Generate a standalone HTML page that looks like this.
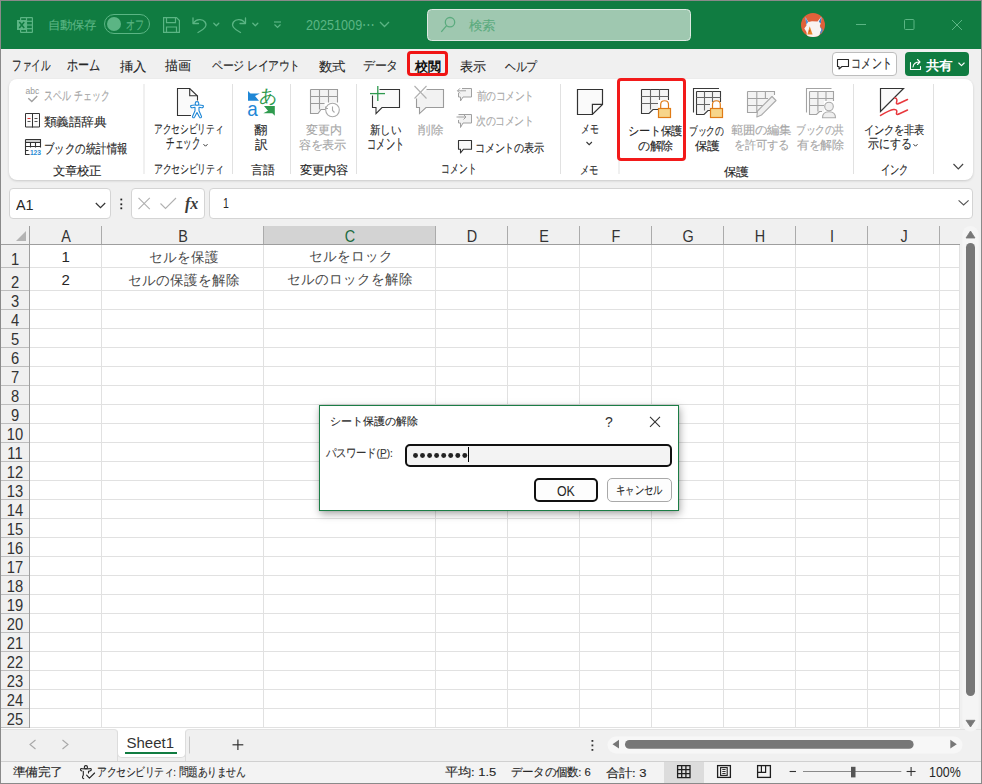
<!DOCTYPE html>
<html><head><meta charset="utf-8">
<style>
*{margin:0;padding:0;box-sizing:border-box}
html,body{width:982px;height:784px;overflow:hidden;background:#f0f0f0}
body{position:relative;font-family:"Liberation Sans",sans-serif;color:#242424}
.a{position:absolute}
.t{position:absolute;white-space:nowrap;line-height:1}
.c{text-align:center}
svg{position:absolute;overflow:visible}
.lg{color:#5bb584}
.rb{font-size:12px;color:#262626}
.t{-webkit-text-stroke:0.12px currentColor}
.ns{-webkit-text-stroke:0}
.gr{color:#a6a6a6}
</style></head><body>
<div class="a" style="left:0;top:0;width:982px;height:784px;border:1px solid #8a8a8a;z-index:50"></div>
<div class="a" style="left:1px;top:1px;width:980px;height:48px;background:#107c41"></div>
<!-- excel icon -->
<svg style="left:0;top:0" width="982" height="49">
 <g fill="none" stroke="#5bb584" stroke-width="1.2">
  <rect x="20.6" y="17.6" width="11.8" height="14.8" rx="0.5"/>
  <line x1="26.5" y1="17.6" x2="26.5" y2="32.4"/>
  <line x1="20.6" y1="21.3" x2="32.4" y2="21.3"/>
  <line x1="20.6" y1="25" x2="32.4" y2="25"/>
  <line x1="20.6" y1="28.7" x2="32.4" y2="28.7"/>
 </g>
 <rect x="17" y="20" width="9.5" height="10" fill="#5bb584"/>
 <path d="M19.3 22 L24.2 28 M24.2 22 L19.3 28" stroke="#107c41" stroke-width="1.5"/>
 <!-- toggle -->
 <rect x="104.5" y="14.5" width="45" height="19" rx="9.5" fill="none" stroke="#5bb584" stroke-width="1"/>
 <circle cx="114" cy="24" r="7" fill="#5bb584"/>
 <!-- save icon -->
 <g fill="none" stroke="#5bb584" stroke-width="1.2">
  <path d="M163.6 17.6 H176.5 L179.4 20.5 V32.4 H163.6 Z"/>
  <path d="M166.5 17.6 V22.6 H175.5 V17.6"/>
  <path d="M166.5 32.4 V27 H176.5 V32.4"/>
 </g>
 <!-- undo -->
 <g fill="none" stroke="#5bb584" stroke-width="1.3" stroke-linecap="round" stroke-linejoin="round">
  <path d="M193 18 V23.5 H198.5"/>
  <path d="M193.5 23 C196 19 202.5 18.5 205 22 C207.5 25.5 205 29 198 32.5"/>
  <path d="M213.8 23.2 L216.3 25.7 L218.8 23.2"/>
 </g>
 <!-- redo -->
 <g fill="none" stroke="#5bb584" stroke-width="1.3" stroke-linecap="round" stroke-linejoin="round">
  <path d="M245.5 18 V23.5 H240"/>
  <path d="M245 23 C242.5 19 236 18.5 233.5 22 C231 25.5 233.5 29 240.5 32.5"/>
  <path d="M252.8 23.2 L255.3 25.7 L257.8 23.2"/>
 </g>
 <!-- customize -->
 <g fill="none" stroke="#5bb584" stroke-width="1.2">
  <line x1="274" y1="22" x2="281" y2="22"/>
  <path d="M274.5 24.5 L277.5 27.5 L280.5 24.5"/>
 </g>
 <!-- filename chevron -->
 <path d="M380 22 L384.5 26.5 L389 22" fill="none" stroke="#5bb584" stroke-width="1.3"/>
 <!-- search box -->
 <rect x="427.5" y="9.5" width="263" height="31" rx="4" fill="#9fc8b0" stroke="#dde9e2" stroke-width="1"/>
 <g fill="none" stroke="#5bab7e" stroke-width="1.3">
  <circle cx="450" cy="22.2" r="4.7"/>
  <line x1="446.6" y1="25.6" x2="441.3" y2="31.8"/>
 </g>
 <!-- avatar -->
 <defs><clipPath id="av"><circle cx="813" cy="25" r="12"/></clipPath></defs>
 <circle cx="813" cy="25" r="12" fill="#e0613a"/>
 <g clip-path="url(#av)">
  <path d="M805.3 17 L808.5 22 L812 21.3 L817.5 21.5 L821.5 16.5 L821 22.5 L819.8 26 L821.5 29.5 L820 33 L819 38 H807 L806.5 32 L804.3 28.5 L806.5 25.5 Z" fill="#f9f3f1"/>
  <path d="M805.3 17 L808.2 22 L806.3 24.5 Z" fill="#4a8fd4"/>
  <path d="M821.5 16.5 L818.8 21.8 L820.8 23.5 Z" fill="#3d7fc4"/>
  <path d="M819.8 26 L821.5 29.5 L820 33 L821 34 L823 30 Z" fill="#4a8fd4"/>
  <path d="M809.7 26.3 L812.6 34.6 H807.4 Z" fill="#e8862a"/>
  <circle cx="809.6" cy="31" r="0.8" fill="#c0392b"/>
 </g>
 <!-- window controls -->
 <g fill="none" stroke="#5bb584" stroke-width="1">
  <line x1="856" y1="24.5" x2="866" y2="24.5"/>
  <rect x="904.5" y="19.5" width="9.5" height="10" rx="1"/>
  <path d="M952 20 L962 30 M962 20 L952 30"/>
 </g>
</svg>
<div class="a" style="left:1px;top:49px;width:980px;height:30px;background:#f0f0f0"></div>
<div class="a" style="left:407px;top:50.5px;width:41px;height:25.5px;border:3px solid #f01414;border-radius:4px"></div>
<div class="a" style="left:832px;top:52px;width:65px;height:24px;background:#fff;border:1px solid #bdbdbd;border-radius:4px"></div>
<div class="a" style="left:905px;top:52px;width:64px;height:24px;background:#107c41;border-radius:4px"></div>
<svg style="left:0;top:0" width="982" height="80">
 <path d="M837.5 59.5 H848.5 V66.5 H842 L839 69 V66.5 H837.5 Z" fill="none" stroke="#262626" stroke-width="1.1" stroke-linejoin="round"/>
 <g fill="none" stroke="#fff" stroke-width="1.1" stroke-linejoin="round" stroke-linecap="round">
  <path d="M910.5 62.5 V69.5 H920.5 V66.5"/>
  <path d="M913 67 C913.5 63.5 916 62 919.5 62 M917.5 59.5 L920 62 L917.5 64.5"/>
  <path d="M958.8 63 L961.5 65.7 L964.2 63"/>
 </g>
</svg>
<div class="a" style="left:9px;top:79px;width:964px;height:101px;background:#fff;border-radius:8px;box-shadow:0 1px 2.5px rgba(0,0,0,.16)"></div>
<svg style="left:0;top:0" width="982" height="184">
 <!-- separators -->
 <g stroke="#e1e1e1" stroke-width="1">
  <line x1="144" y1="84" x2="144" y2="174"/>
  <line x1="232.5" y1="84" x2="232.5" y2="174"/>
  <line x1="290.5" y1="84" x2="290.5" y2="174"/>
  <line x1="356.5" y1="84" x2="356.5" y2="174"/>
  <line x1="560.5" y1="84" x2="560.5" y2="174"/>
  <line x1="619" y1="161" x2="619" y2="174"/>
  <line x1="853.5" y1="84" x2="853.5" y2="174"/>
  <line x1="933.5" y1="84" x2="933.5" y2="174"/>
 </g>
 <!-- spell check -->
 <text x="25.5" y="93.8" font-family="Liberation Sans" font-size="8.5" fill="#9a9a9a">abc</text>
 <path d="M28.3 98.3 L31.8 101.6 L37.2 96" fill="none" stroke="#a0a0a0" stroke-width="1.4"/>
 <!-- thesaurus book -->
 <path d="M25.5 113.5 H39.5 V127 H25.5 Z" fill="#fafafa" stroke="#333" stroke-width="1"/>
 <line x1="32.5" y1="113.5" x2="32.5" y2="127.5" stroke="#333" stroke-width="1"/>
 <line x1="27.5" y1="118.5" x2="30.5" y2="118.5" stroke="#e03030" stroke-width="1"/>
 <g stroke="#555" stroke-width="1"><line x1="34.5" y1="118.5" x2="37.5" y2="118.5"/><line x1="27.5" y1="121.5" x2="30.5" y2="121.5"/><line x1="34.5" y1="121.5" x2="37.5" y2="121.5"/></g>
 <!-- workbook stats -->
 <rect x="26" y="140" width="14" height="2.2" fill="#cfcfcf"/>
 <path d="M25.5 139.5 H40.5 V147.5 M25.5 139.5 V154.5 H29.6 M25.5 142.5 H40.5 M25.5 146.5 H40.5 M30.5 142.5 V147.5 M35.5 142.5 V147.5 M25.5 150.5 H28.5" fill="none" stroke="#333" stroke-width="1.1"/>
 <text x="29.9" y="154.6" font-family="Liberation Sans" font-weight="bold" font-size="7.6" fill="#2a8ad4" textLength="11.2" lengthAdjust="spacingAndGlyphs">123</text>
 <!-- accessibility -->
 <path d="M197.5 100.5 V96 L189.7 88.5 H177.5 V115.5 H190.9" fill="#fafafa" stroke="#333" stroke-width="1.1"/>
 <path d="M189.7 88.5 V95.8 H197.5" fill="none" stroke="#333" stroke-width="1.1"/>
 <g fill="#fff" stroke="#1f87d6" stroke-width="1.1" stroke-linejoin="round">
  <path d="M191 105.5 C190 106.5 191 108 192.5 107.8 L195 107.3 V110.8 L192.6 116.3 C192 117.6 193.8 118.3 194.5 117.2 L197 112.5 L199.5 117.2 C200.2 118.3 202 117.6 201.4 116.3 L199 110.8 V107.3 L201.5 107.8 C203 108 204 106.5 203 105.5 L199.5 105 H194.5 Z"/>
  <circle cx="197" cy="103.4" r="1.8"/>
 </g>
 <!-- translate -->
 <path d="M248 91 L250.5 93.5 L259.8 93.5 L255 96 L259 100.8 L248 100.8 Z" fill="#1f87d6"/>
 <text x="247.3" y="115.6" font-family="Liberation Sans" font-size="21" fill="#1f87d6" textLength="10.5" lengthAdjust="spacingAndGlyphs">a</text>
 <text x="259.3" y="101.5" font-size="17.5" fill="#2e9a4e" style="font-family:'Liberation Sans',sans-serif">あ</text>
 <path d="M274.8 106 L274.8 115.8 L272.3 113.3 L263.3 113.3 L268 110.8 L264 106 Z" fill="#2e9a4e"/>
 <!-- track changes (gray) -->
 <path d="M310.5 89.5 H337.5 V102.5 H324.5 V109.5 H321 L318 113.5 H310.5 Z" fill="#f3f3f3"/>
 <g fill="none" stroke="#9b9b9b" stroke-width="1.1">
  <path d="M310.5 89.5 H337.5 V102.5 M310.5 89.5 V113.5 H318 L321 109.5 H325.5 M310.5 96.5 H337.5 M310.5 103.5 H324.5 M319.5 89.5 V109.5 M328.5 89.5 V102.5"/>
  <circle cx="332.5" cy="110" r="6.8" stroke="#aaa"/>
  <path d="M332.5 106.5 V110.5 L334.5 112.5" stroke="#aaa"/>
 </g>
 <path d="M325.5 106.5 V108.5 H328" fill="none" stroke="#aaa" stroke-width="1.1"/>
 <!-- new comment -->
 <path d="M379.5 89.5 H399.5 V107.5 H382 L376 113.6 V107.5 H372.5 V95.5" fill="#fafafa" stroke="#333" stroke-width="1.1"/>
 <g stroke="#2e9a4e" stroke-width="1.3"><line x1="377.8" y1="86" x2="377.8" y2="101"/><line x1="370" y1="93.6" x2="385" y2="93.6"/></g>
 <!-- delete comment -->
 <path d="M426.5 89.5 H443.5 V107.5 H426 L419.5 113.6 V107.5 H416.5 V98.5" fill="#f2f2f2" stroke="#9b9b9b" stroke-width="1.1"/>
 <g stroke="#b0b0b0" stroke-width="1.1"><line x1="414.5" y1="86" x2="426.5" y2="98.5"/><line x1="426.5" y1="86" x2="414.5" y2="98.5"/></g>
 <!-- prev / next / show comments -->
 <g fill="#f2f2f2" stroke="#a0a0a0" stroke-width="1">
  <path d="M462 88.5 H471.5 V97 H463 L460.5 101 V97 H458.5 V93"/>
  <path d="M458.5 114.5 H471.5 V123 H463 L460.5 127.5 V123 H458.5 V120"/>
 </g>
 <g fill="none" stroke="#a0a0a0" stroke-width="1">
  <path d="M466 90.8 H457.5 M460 88.3 L457.5 90.8 L460 93.3"/>
  <path d="M456.5 117 H466 M463.5 114.5 L466 117 L463.5 119.5"/>
 </g>
 <path d="M458.5 140.5 H471.5 V149.2 H463.5 L460.5 153 V149.2 H458.5 Z" fill="#fafafa" stroke="#333" stroke-width="1.1" stroke-linejoin="round"/>
 <!-- memo -->
 <path d="M577.5 89.5 H602.5 V104.4 L592.4 114.5 H577.5 Z" fill="#fafafa" stroke="#333" stroke-width="1.2"/>
 <path d="M602.5 104.4 H592.4 V114.5" fill="none" stroke="#333" stroke-width="1.2"/>
 <path d="M586.5 142 L589.2 144.7 L591.9 142" fill="none" stroke="#333" stroke-width="1.1"/>
 <!-- unprotect sheet -->
 <path d="M641.5 89.5 H668.5 V100 H658 V109.5 H653 L649 113.5 H641.5 Z" fill="#f4f4f4"/>
 <g fill="none" stroke="#3a3a3a" stroke-width="1.1">
  <path d="M641.5 89.5 H668.5 V100 M641.5 89.5 V113.5 H649 L653 109.5 H660"/>
  <path d="M641.5 96.5 H668.5 M641.5 103.5 H658 M650.5 89.5 V109.5 M659.5 89.5 V100" stroke="#666"/>
 </g>
 <g stroke="#e07b16" stroke-width="1.2">
  <path d="M660.7 108 V104.5 C660.7 99.5 668.5 99.5 668.5 104.5 V108" fill="none"/>
  <rect x="658.5" y="108.5" width="12" height="9" fill="#f7d58a"/>
 </g>
 <!-- protect workbook -->
 <path d="M696.5 91.5 H720.5 V102 H710 V110.5 H708 L704 114.5 H696.5 Z" fill="#f4f4f4"/>
 <g fill="none" stroke="#3a3a3a" stroke-width="1.1">
  <path d="M719 88.5 H693.5 V112.5"/>
  <path d="M696.5 91.5 H720.5 V102 M696.5 91.5 V114.5 H704 L708 110.5 H710"/>
  <path d="M696.5 97.5 H720.5 M696.5 104.5 H710 M704.5 91.5 V110.5 M712.5 91.5 V102" stroke="#666"/>
 </g>
 <g stroke="#e07b16" stroke-width="1.2">
  <path d="M712.5 108 V104.5 C712.5 99.5 720.3 99.5 720.3 104.5 V108" fill="none"/>
  <rect x="710.5" y="108.5" width="12" height="9" fill="#f7d58a"/>
 </g>
 <!-- allow edit ranges (gray) -->
 <path d="M747.5 91.5 H774.5 V95 L760 112.5 H747.5 Z" fill="#f3f3f3"/>
 <g fill="none" stroke="#a3a3a3" stroke-width="1.1">
  <path d="M747.5 91.5 H774.5 V95 M747.5 91.5 V112.5 H760 M747.5 98.5 H768 M747.5 105.5 H763 M756.8 91.5 V112.5 M765.4 91.5 V98.5"/>
 </g>
 <path d="M772 96.5 L776 100.5 L761.5 115 L756.8 117 L757.5 111 Z" fill="#efefef" stroke="#aaa" stroke-width="1.1" stroke-linejoin="round"/>
 <!-- unshare workbook -->
 <path d="M809.5 91.5 H833.5 V101 H824 V111.5 H819.5 L816.5 114.5 H809.5 Z" fill="#f3f3f3"/>
 <g fill="none" stroke="#a3a3a3" stroke-width="1.1">
  <path d="M831.5 88.5 H806.5 V112.5"/>
  <path d="M809.5 91.5 H833.5 V101 M809.5 91.5 V114.5 H816.5 L819.5 111.5 H822 M809.5 98.5 H833.5 M809.5 105.5 H824 M817.9 91.5 V111.5 M826 91.5 V101"/>
 </g>
 <g fill="#efefef" stroke="#aaa" stroke-width="1.1">
  <circle cx="829" cy="106.5" r="4.3"/>
  <path d="M822.5 117.8 C822.5 113.5 825.5 111.8 829 111.8 C832.5 111.8 835.5 113.5 835.5 117.8 Z"/>
 </g>
 <!-- ink -->
 <path d="M880.5 88.5 H903.5 L880.5 111.5 Z" fill="#fafafa" stroke="#333" stroke-width="1.2" stroke-linejoin="miter"/>
 <g fill="none" stroke="#e8383d" stroke-width="1.5" stroke-linecap="round">
  <path d="M894.8 98 C897.5 98 897 101 896.5 102.5 C896 104.5 898 104 900 103 L907.5 99.5"/>
  <path d="M880.5 115.5 C884 113.5 889 110.3 893.5 109.5 C897.5 109 897 111.5 896.5 113 C896 115 898 114.5 900 113.5 L907.5 110"/>
 </g>
 <!-- chevrons -->
 <path d="M203.5 144.2 L205.5 146.2 L207.5 144.2" fill="none" stroke="#333" stroke-width="1"/>
 <path d="M913.5 144.2 L915.5 146.2 L917.5 144.2" fill="none" stroke="#333" stroke-width="1"/>
 <path d="M953.5 164 L958.3 168.8 L963.1 164" fill="none" stroke="#444" stroke-width="1.2"/>
</svg>
<div class="a" style="left:617px;top:78px;width:69px;height:83px;border:3px solid #f21a1a;border-radius:4px"></div>
<div class="a" style="left:9px;top:188px;width:102px;height:31px;background:#fff;border:1px solid #d4d4d4;border-radius:4px"></div>
<div class="a" style="left:131px;top:188px;width:74px;height:31px;background:#fff;border:1px solid #d4d4d4;border-radius:4px"></div>
<div class="a" style="left:209px;top:188px;width:764px;height:31px;background:#fff;border:1px solid #d4d4d4;border-radius:4px"></div>
<svg style="left:0;top:0" width="982" height="226">
 <path d="M95.8 203 L100.5 207.7 L105.2 203" fill="none" stroke="#333" stroke-width="1.2"/>
 <g fill="#222"><rect x="120.4" y="198.6" width="1.8" height="1.8"/><rect x="120.4" y="203.4" width="1.8" height="1.8"/><rect x="120.4" y="207.4" width="1.8" height="1.8"/></g>
 <path d="M138.5 197.8 L149.8 209.1 M149.8 197.8 L138.5 209.1" stroke="#b0b0b0" stroke-width="1.1"/>
 <path d="M160.5 203.5 L165.5 208.5 L176 198" fill="none" stroke="#b0b0b0" stroke-width="1.1"/>
 <text x="185" y="208.5" font-family="Liberation Serif" font-style="italic" font-weight="bold" font-size="16" fill="#3a3a3a">fx</text>
 <path d="M958.6 200.3 L963.6 205 L968.6 200.3" fill="none" stroke="#555" stroke-width="1.1"/>
</svg>
<div class="a" style="left:30px;top:245px;width:930px;height:484px;background:#fff"></div>
<div class="a" style="left:264px;top:226px;width:171px;height:18px;background:#d3d3d3"></div>
<svg style="left:0;top:0" width="982" height="784" shape-rendering="crispEdges"><line x1="30" y1="267.5" x2="960" y2="267.5" stroke="#e1e1e1"/><line x1="1" y1="267.5" x2="29" y2="267.5" stroke="#bdbdbd"/><line x1="30" y1="290.5" x2="960" y2="290.5" stroke="#e1e1e1"/><line x1="1" y1="290.5" x2="29" y2="290.5" stroke="#bdbdbd"/><line x1="30" y1="309.5" x2="960" y2="309.5" stroke="#e1e1e1"/><line x1="1" y1="309.5" x2="29" y2="309.5" stroke="#bdbdbd"/><line x1="30" y1="328.5" x2="960" y2="328.5" stroke="#e1e1e1"/><line x1="1" y1="328.5" x2="29" y2="328.5" stroke="#bdbdbd"/><line x1="30" y1="347.5" x2="960" y2="347.5" stroke="#e1e1e1"/><line x1="1" y1="347.5" x2="29" y2="347.5" stroke="#bdbdbd"/><line x1="30" y1="366.5" x2="960" y2="366.5" stroke="#e1e1e1"/><line x1="1" y1="366.5" x2="29" y2="366.5" stroke="#bdbdbd"/><line x1="30" y1="385.5" x2="960" y2="385.5" stroke="#e1e1e1"/><line x1="1" y1="385.5" x2="29" y2="385.5" stroke="#bdbdbd"/><line x1="30" y1="404.5" x2="960" y2="404.5" stroke="#e1e1e1"/><line x1="1" y1="404.5" x2="29" y2="404.5" stroke="#bdbdbd"/><line x1="30" y1="423.5" x2="960" y2="423.5" stroke="#e1e1e1"/><line x1="1" y1="423.5" x2="29" y2="423.5" stroke="#bdbdbd"/><line x1="30" y1="442.5" x2="960" y2="442.5" stroke="#e1e1e1"/><line x1="1" y1="442.5" x2="29" y2="442.5" stroke="#bdbdbd"/><line x1="30" y1="461.5" x2="960" y2="461.5" stroke="#e1e1e1"/><line x1="1" y1="461.5" x2="29" y2="461.5" stroke="#bdbdbd"/><line x1="30" y1="480.5" x2="960" y2="480.5" stroke="#e1e1e1"/><line x1="1" y1="480.5" x2="29" y2="480.5" stroke="#bdbdbd"/><line x1="30" y1="499.5" x2="960" y2="499.5" stroke="#e1e1e1"/><line x1="1" y1="499.5" x2="29" y2="499.5" stroke="#bdbdbd"/><line x1="30" y1="518.5" x2="960" y2="518.5" stroke="#e1e1e1"/><line x1="1" y1="518.5" x2="29" y2="518.5" stroke="#bdbdbd"/><line x1="30" y1="537.5" x2="960" y2="537.5" stroke="#e1e1e1"/><line x1="1" y1="537.5" x2="29" y2="537.5" stroke="#bdbdbd"/><line x1="30" y1="556.5" x2="960" y2="556.5" stroke="#e1e1e1"/><line x1="1" y1="556.5" x2="29" y2="556.5" stroke="#bdbdbd"/><line x1="30" y1="575.5" x2="960" y2="575.5" stroke="#e1e1e1"/><line x1="1" y1="575.5" x2="29" y2="575.5" stroke="#bdbdbd"/><line x1="30" y1="594.5" x2="960" y2="594.5" stroke="#e1e1e1"/><line x1="1" y1="594.5" x2="29" y2="594.5" stroke="#bdbdbd"/><line x1="30" y1="613.5" x2="960" y2="613.5" stroke="#e1e1e1"/><line x1="1" y1="613.5" x2="29" y2="613.5" stroke="#bdbdbd"/><line x1="30" y1="632.5" x2="960" y2="632.5" stroke="#e1e1e1"/><line x1="1" y1="632.5" x2="29" y2="632.5" stroke="#bdbdbd"/><line x1="30" y1="651.5" x2="960" y2="651.5" stroke="#e1e1e1"/><line x1="1" y1="651.5" x2="29" y2="651.5" stroke="#bdbdbd"/><line x1="30" y1="670.5" x2="960" y2="670.5" stroke="#e1e1e1"/><line x1="1" y1="670.5" x2="29" y2="670.5" stroke="#bdbdbd"/><line x1="30" y1="689.5" x2="960" y2="689.5" stroke="#e1e1e1"/><line x1="1" y1="689.5" x2="29" y2="689.5" stroke="#bdbdbd"/><line x1="30" y1="708.5" x2="960" y2="708.5" stroke="#e1e1e1"/><line x1="1" y1="708.5" x2="29" y2="708.5" stroke="#bdbdbd"/><line x1="30" y1="727.5" x2="960" y2="727.5" stroke="#e1e1e1"/><line x1="1" y1="727.5" x2="29" y2="727.5" stroke="#bdbdbd"/><line x1="101.5" y1="245" x2="101.5" y2="728" stroke="#e1e1e1"/><line x1="263.5" y1="245" x2="263.5" y2="728" stroke="#e1e1e1"/><line x1="435.5" y1="245" x2="435.5" y2="728" stroke="#e1e1e1"/><line x1="507.5" y1="245" x2="507.5" y2="728" stroke="#e1e1e1"/><line x1="579.5" y1="245" x2="579.5" y2="728" stroke="#e1e1e1"/><line x1="651.5" y1="245" x2="651.5" y2="728" stroke="#e1e1e1"/><line x1="723.5" y1="245" x2="723.5" y2="728" stroke="#e1e1e1"/><line x1="795.5" y1="245" x2="795.5" y2="728" stroke="#e1e1e1"/><line x1="867.5" y1="245" x2="867.5" y2="728" stroke="#e1e1e1"/><line x1="939.5" y1="245" x2="939.5" y2="728" stroke="#e1e1e1"/><line x1="959.5" y1="245" x2="959.5" y2="728" stroke="#e1e1e1"/><line x1="101.5" y1="226" x2="101.5" y2="244" stroke="#ababab"/><line x1="263.5" y1="226" x2="263.5" y2="244" stroke="#ababab"/><line x1="435.5" y1="226" x2="435.5" y2="244" stroke="#ababab"/><line x1="507.5" y1="226" x2="507.5" y2="244" stroke="#ababab"/><line x1="579.5" y1="226" x2="579.5" y2="244" stroke="#ababab"/><line x1="651.5" y1="226" x2="651.5" y2="244" stroke="#ababab"/><line x1="723.5" y1="226" x2="723.5" y2="244" stroke="#ababab"/><line x1="795.5" y1="226" x2="795.5" y2="244" stroke="#ababab"/><line x1="867.5" y1="226" x2="867.5" y2="244" stroke="#ababab"/><line x1="939.5" y1="226" x2="939.5" y2="244" stroke="#ababab"/><line x1="1" y1="244.5" x2="960" y2="244.5" stroke="#9e9e9e"/><line x1="29.5" y1="226" x2="29.5" y2="729" stroke="#9e9e9e"/></svg>
<svg style="left:0;top:0" width="982" height="784"><path d="M16 241 H26 V231 Z" fill="#b4b4b4"/></svg>
<div class="t c ns" style="left:45.5px;top:229.2px;width:40px;font-size:16px;color:#333;transform:scaleX(0.9)">A</div>
<div class="t c ns" style="left:162.5px;top:229.2px;width:40px;font-size:16px;color:#333;transform:scaleX(0.9)">B</div>
<div class="t c ns" style="left:329.5px;top:229.2px;width:40px;font-size:16px;color:#1d6b3f;transform:scaleX(0.9)">C</div>
<div class="t c ns" style="left:451.5px;top:229.2px;width:40px;font-size:16px;color:#333;transform:scaleX(0.9)">D</div>
<div class="t c ns" style="left:523.5px;top:229.2px;width:40px;font-size:16px;color:#333;transform:scaleX(0.9)">E</div>
<div class="t c ns" style="left:595.5px;top:229.2px;width:40px;font-size:16px;color:#333;transform:scaleX(0.9)">F</div>
<div class="t c ns" style="left:667.5px;top:229.2px;width:40px;font-size:16px;color:#333;transform:scaleX(0.9)">G</div>
<div class="t c ns" style="left:739.5px;top:229.2px;width:40px;font-size:16px;color:#333;transform:scaleX(0.9)">H</div>
<div class="t c ns" style="left:811.5px;top:229.2px;width:40px;font-size:16px;color:#333;transform:scaleX(0.9)">I</div>
<div class="t c ns" style="left:883.5px;top:229.2px;width:40px;font-size:16px;color:#333;transform:scaleX(0.9)">J</div>
<div class="t c ns" style="left:0px;top:251.8px;width:30px;font-size:16px;color:#333;transform:scaleX(0.92)">1</div>
<div class="t c ns" style="left:0px;top:274.8px;width:30px;font-size:16px;color:#333;transform:scaleX(0.92)">2</div>
<div class="t c ns" style="left:0px;top:293.8px;width:30px;font-size:16px;color:#333;transform:scaleX(0.92)">3</div>
<div class="t c ns" style="left:0px;top:312.8px;width:30px;font-size:16px;color:#333;transform:scaleX(0.92)">4</div>
<div class="t c ns" style="left:0px;top:331.8px;width:30px;font-size:16px;color:#333;transform:scaleX(0.92)">5</div>
<div class="t c ns" style="left:0px;top:350.8px;width:30px;font-size:16px;color:#333;transform:scaleX(0.92)">6</div>
<div class="t c ns" style="left:0px;top:369.8px;width:30px;font-size:16px;color:#333;transform:scaleX(0.92)">7</div>
<div class="t c ns" style="left:0px;top:388.8px;width:30px;font-size:16px;color:#333;transform:scaleX(0.92)">8</div>
<div class="t c ns" style="left:0px;top:407.8px;width:30px;font-size:16px;color:#333;transform:scaleX(0.92)">9</div>
<div class="t c ns" style="left:0px;top:426.8px;width:30px;font-size:16px;color:#333;transform:scaleX(0.92)">10</div>
<div class="t c ns" style="left:0px;top:445.8px;width:30px;font-size:16px;color:#333;transform:scaleX(0.92)">11</div>
<div class="t c ns" style="left:0px;top:464.8px;width:30px;font-size:16px;color:#333;transform:scaleX(0.92)">12</div>
<div class="t c ns" style="left:0px;top:483.8px;width:30px;font-size:16px;color:#333;transform:scaleX(0.92)">13</div>
<div class="t c ns" style="left:0px;top:502.8px;width:30px;font-size:16px;color:#333;transform:scaleX(0.92)">14</div>
<div class="t c ns" style="left:0px;top:521.8px;width:30px;font-size:16px;color:#333;transform:scaleX(0.92)">15</div>
<div class="t c ns" style="left:0px;top:540.8px;width:30px;font-size:16px;color:#333;transform:scaleX(0.92)">16</div>
<div class="t c ns" style="left:0px;top:559.8px;width:30px;font-size:16px;color:#333;transform:scaleX(0.92)">17</div>
<div class="t c ns" style="left:0px;top:578.8px;width:30px;font-size:16px;color:#333;transform:scaleX(0.92)">18</div>
<div class="t c ns" style="left:0px;top:597.8px;width:30px;font-size:16px;color:#333;transform:scaleX(0.92)">19</div>
<div class="t c ns" style="left:0px;top:616.8px;width:30px;font-size:16px;color:#333;transform:scaleX(0.92)">20</div>
<div class="t c ns" style="left:0px;top:635.8px;width:30px;font-size:16px;color:#333;transform:scaleX(0.92)">21</div>
<div class="t c ns" style="left:0px;top:654.8px;width:30px;font-size:16px;color:#333;transform:scaleX(0.92)">22</div>
<div class="t c ns" style="left:0px;top:673.8px;width:30px;font-size:16px;color:#333;transform:scaleX(0.92)">23</div>
<div class="t c ns" style="left:0px;top:692.8px;width:30px;font-size:16px;color:#333;transform:scaleX(0.92)">24</div>
<div class="t c ns" style="left:0px;top:711.8px;width:30px;font-size:16px;color:#333;transform:scaleX(0.92)">25</div>
<div class="a" style="left:1px;top:728px;width:959px;height:22px;background:#fff"></div>
<div class="a" style="left:1px;top:750px;width:980px;height:11px;background:#f0f0f0"></div>
<div class="a" style="left:1px;top:729px;width:116.5px;height:32px;background:#f0f0f0;border-top:1px solid #e2e2e2;border-right:1px solid #dcdcdc;border-top-right-radius:4px"></div>
<div class="a" style="left:184.5px;top:729px;width:796.5px;height:32px;background:#f0f0f0;border-top:1px solid #e2e2e2;border-left:1px solid #dcdcdc;border-top-left-radius:4px"></div>
<div class="a" style="left:116.5px;top:745px;width:69px;height:13px;background:#fff;border:1px solid #dcdcdc;border-top:none;border-radius:0 0 5px 5px"></div>
<div class="a" style="left:1px;top:761px;width:980px;height:22px;background:#f3f3f3;border-top:1px solid #d0d0d0"></div>
<div class="a" style="left:664px;top:762px;width:40px;height:21px;background:#dcdcdc"></div>
<svg style="left:0;top:0" width="982" height="784">
 <g fill="none" stroke="#a8a8a8" stroke-width="1.1">
  <path d="M35.5 740 L30 744.5 L35.5 749"/>
  <path d="M62.5 740 L68 744.5 L62.5 749"/>
 </g>
 <rect x="125" y="752" width="52" height="2" fill="#107c41"/>
 <line x1="189.5" y1="736.5" x2="189.5" y2="753.5" stroke="#c8c8c8" stroke-width="1"/>
 <g stroke="#333" stroke-width="1.2"><line x1="232.5" y1="744.8" x2="243.3" y2="744.8"/><line x1="237.9" y1="739.6" x2="237.9" y2="750"/></g>
 <g fill="#333"><rect x="591.5" y="740" width="1.8" height="1.8"/><rect x="591.5" y="744.5" width="1.8" height="1.8"/><rect x="591.5" y="749" width="1.8" height="1.8"/></g>
 <rect x="607.5" y="736.5" width="355" height="17" rx="8.5" fill="#f7f7f7"/>
 <path d="M612.5 744.2 L619 739.8 V748.6 Z" fill="#777"/>
 <rect x="625" y="740" width="288.6" height="8.8" rx="4.4" fill="#777"/>
 <path d="M956.8 744.2 L950.3 739.8 V748.6 Z" fill="#777"/>
 <!-- accessibility status icon -->
 <g fill="none" stroke="#222" stroke-width="1.1" stroke-linecap="round" stroke-linejoin="round">
  <circle cx="85.9" cy="767.2" r="1.6"/>
  <path d="M82 771 C80 770.8 80 768.2 82 768.6 L85.9 769 L89.8 768.6 C91.8 768.2 91.8 770.8 89.8 771 L88.5 771.4 V773"/>
  <path d="M83.3 771.4 V775 C82.5 776.5 81.8 778.5 83.8 778.7"/>
  <path d="M86.6 775.2 L89.4 778.2 L94.6 773"/>
 </g>
 <!-- view icons -->
 <g fill="none" stroke="#1e1e1e" stroke-width="1.3">
  <path d="M677.6 765.6 H690 V777.6 H677.6 Z M677.6 769.6 H690 M677.6 773.6 H690 M681.7 765.6 V777.6 M685.9 765.6 V777.6"/>
  <rect x="717.6" y="765.6" width="12.8" height="11.8"/>
  <rect x="720.6" y="767.6" width="6.6" height="7.8" stroke-width="1.1"/>
  <path d="M722.3 769.5 H725.6 M722.3 771.5 H725.6 M722.3 773.5 H725.6" stroke-width="0.9"/>
  <rect x="757.6" y="765.6" width="12.8" height="11.8"/>
  <path d="M757.6 772.3 H765.6 V765.6 M761.4 765.6 V772.3" stroke-width="1.2"/>
 </g>
 <g stroke="#333" stroke-width="1.1">
  <line x1="789.6" y1="771.5" x2="796" y2="771.5"/>
  <line x1="906.6" y1="771.5" x2="915.6" y2="771.5"/><line x1="911.1" y1="767" x2="911.1" y2="776"/>
 </g>
 <line x1="803" y1="771.5" x2="901.3" y2="771.5" stroke="#8a8a8a" stroke-width="1"/>
 <rect x="851" y="766.8" width="4.5" height="10.6" fill="#555"/>
</svg>
<svg style="left:0;top:0" width="982" height="784">
 <rect x="962.5" y="226" width="16" height="505.5" rx="8" fill="#f5f5f5"/>
 <path d="M970.5 231 L975 238 H966 Z" fill="#777" stroke="#777" stroke-width="0.8" stroke-linejoin="round"/>
 <rect x="966" y="243" width="9" height="453" rx="4.5" fill="#777"/>
 <path d="M970.5 727 L975 720.3 H966 Z" fill="#777" stroke="#777" stroke-width="0.8" stroke-linejoin="round"/>
</svg>
<div class="a" style="left:319px;top:405px;width:360px;height:106px;background:#fff;border:1px solid #1b7d45;box-shadow:1px 3px 8px rgba(0,0,0,.34),0 0 2px rgba(0,0,0,.12)"></div>
<div class="a" style="left:405px;top:444px;width:267px;height:22.5px;background:#f3f3f3;border:2.5px solid #111;border-radius:5px"></div>
<div class="a" style="left:533.5px;top:478px;width:64px;height:23.5px;background:#fdfdfd;border:2.5px solid #111;border-radius:5px"></div>
<div class="a" style="left:607px;top:478px;width:64.5px;height:23.5px;background:#fdfdfd;border:1px solid #a9a9a9;border-radius:5px"></div>
<svg style="left:0;top:0" width="982" height="784">
 <g fill="#222">
  <circle cx="415.5" cy="455.5" r="2.45"/><circle cx="422.5" cy="455.5" r="2.45"/><circle cx="429.6" cy="455.5" r="2.45"/><circle cx="436.6" cy="455.5" r="2.45"/>
  <circle cx="443.7" cy="455.5" r="2.45"/><circle cx="450.7" cy="455.5" r="2.45"/><circle cx="457.8" cy="455.5" r="2.45"/><circle cx="464.8" cy="455.5" r="2.45"/>
 </g>
 <rect x="468" y="447" width="1" height="15" fill="#000"/>
 <path d="M650 416.8 L660 426.8 M660 416.8 L650 426.8" stroke="#333" stroke-width="1.1"/>
</svg>
<div class="t" style="left:47.7px;top:18.7px;font-size:12px;color:#5bb584;transform:scale(1.007,0.970);transform-origin:0 0;">自動保存</div>
<div class="t" style="left:126.2px;top:17.8px;font-size:12px;color:#5bb584;transform:scale(0.773,1.111);transform-origin:0 0;">オフ</div>
<div class="t ns" style="left:306.0px;top:18.3px;font-size:13px;color:#5bb584;transform:scale(0.971,1.067);transform-origin:0 0;">20251009⋯</div>
<div class="t" style="left:469.1px;top:19.2px;font-size:13px;color:#5bab7e;transform:scale(1.012,0.970);transform-origin:0 0;">検索</div>
<div class="t" style="left:11.5px;top:57.5px;font-size:13px;color:#262626;transform:scale(0.734,1.064);transform-origin:0 0;">ファイル</div>
<div class="t" style="left:67.1px;top:57.3px;font-size:13px;color:#262626;transform:scale(0.865,1.170);transform-origin:0 0;">ホーム</div>
<div class="t" style="left:120.0px;top:59.6px;font-size:13px;color:#262626;transform:scale(1.000,0.970);transform-origin:0 0;">挿入</div>
<div class="t" style="left:165.0px;top:58.6px;font-size:13px;color:#262626;">描画</div>
<div class="t" style="left:212.0px;top:58.6px;font-size:13px;color:#262626;transform:scale(0.819,0.975);transform-origin:0 0;">ページ レイアウト</div>
<div class="t" style="left:319.0px;top:59.6px;font-size:13px;color:#262626;transform:scale(1.000,0.970);transform-origin:0 0;">数式</div>
<div class="t" style="left:362.6px;top:58.6px;font-size:13px;color:#262626;transform:scale(0.897,0.975);transform-origin:0 0;">データ</div>
<div class="t ns" style="left:415.0px;top:59.6px;font-size:13px;color:#111;transform:scale(0.973,0.970);transform-origin:0 0;font-weight:bold">校閲</div>
<div class="t" style="left:460.0px;top:59.6px;font-size:13px;color:#262626;transform:scale(0.973,0.970);transform-origin:0 0;">表示</div>
<div class="t" style="left:505.0px;top:59.6px;font-size:13px;color:#262626;transform:scale(0.821,0.975);transform-origin:0 0;">ヘルプ</div>
<div class="t" style="left:851.3px;top:56.3px;font-size:12px;color:#262626;transform:scale(0.860,1.200);transform-origin:0 0;">コメント</div>
<div class="t ns" style="left:925.6px;top:58.7px;font-size:13px;color:#fff;transform:scale(1.015,0.970);transform-origin:0 0;font-weight:bold">共有</div>
<div class="t" style="left:44.2px;top:88.6px;font-size:12px;color:#a6a6a6;transform:scale(0.762,1.111);transform-origin:0 0;">スペル チェック</div>
<div class="t" style="left:44.0px;top:115.8px;font-size:12px;color:#262626;transform:scale(1.034,0.970);transform-origin:0 0;">類義語辞典</div>
<div class="t" style="left:44.1px;top:142.0px;font-size:12px;color:#262626;transform:scale(0.872,1.091);transform-origin:0 0;">ブックの統計情報</div>
<div class="t" style="left:53.0px;top:165.0px;font-size:12px;color:#262626;transform:scale(1.009,0.970);transform-origin:0 0;">文章校正</div>
<div class="t" style="left:153.9px;top:123.0px;font-size:12px;color:#262626;transform:scale(0.723,1.000);transform-origin:0 0;">アクセシビリティ</div>
<div class="t" style="left:166.3px;top:136.0px;font-size:12px;color:#262626;transform:scale(0.711,1.244);transform-origin:0 0;">チェック</div>
<div class="t" style="left:153.9px;top:163.0px;font-size:12px;color:#262626;transform:scale(0.723,0.970);transform-origin:0 0;">アクセシビリティ</div>
<div class="t" style="left:254.3px;top:124.0px;font-size:12px;color:#262626;transform:scale(1.118,1.000);transform-origin:0 0;">翻</div>
<div class="t" style="left:255.4px;top:138.5px;font-size:12px;color:#262626;transform:scale(1.025,1.045);transform-origin:0 0;">訳</div>
<div class="t" style="left:251.0px;top:164.0px;font-size:12px;color:#262626;transform:scale(0.970,0.970);transform-origin:0 0;">言語</div>
<div class="t" style="left:306.0px;top:124.0px;font-size:12px;color:#a6a6a6;">変更内</div>
<div class="t" style="left:299.0px;top:138.5px;font-size:12px;color:#a6a6a6;transform:scale(0.979,0.970);transform-origin:0 0;">容を表示</div>
<div class="t" style="left:300.0px;top:164.0px;font-size:12px;color:#262626;transform:scale(1.000,0.970);transform-origin:0 0;">変更内容</div>
<div class="t" style="left:369.7px;top:124.0px;font-size:12px;color:#262626;transform:scale(0.869,1.000);transform-origin:0 0;">新しい</div>
<div class="t" style="left:367.4px;top:135.9px;font-size:12px;color:#262626;transform:scale(0.784,1.278);transform-origin:0 0;">コメント</div>
<div class="t" style="left:418.0px;top:124.0px;font-size:12px;color:#a6a6a6;transform:scale(1.043,1.000);transform-origin:0 0;">削除</div>
<div class="t" style="left:477.0px;top:90.0px;font-size:12px;color:#a6a6a6;transform:scale(0.790,0.970);transform-origin:0 0;">前のコメント</div>
<div class="t" style="left:476.2px;top:115.0px;font-size:12px;color:#a6a6a6;transform:scale(0.801,0.970);transform-origin:0 0;">次のコメント</div>
<div class="t" style="left:475.4px;top:142.0px;font-size:12px;color:#262626;transform:scale(0.817,0.970);transform-origin:0 0;">コメントの表示</div>
<div class="t" style="left:440.5px;top:161.8px;font-size:12px;color:#262626;transform:scale(0.753,1.111);transform-origin:0 0;">コメント</div>
<div class="t" style="left:580.7px;top:123.4px;font-size:12px;color:#262626;transform:scale(0.736,1.000);transform-origin:0 0;">メモ</div>
<div class="t" style="left:580.2px;top:163.7px;font-size:12px;color:#262626;transform:scale(0.773,1.000);transform-origin:0 0;">メモ</div>
<div class="t" style="left:627.6px;top:125.4px;font-size:12px;color:#262626;transform:scale(0.905,0.970);transform-origin:0 0;">シート保護</div>
<div class="t" style="left:638.0px;top:140.0px;font-size:12px;color:#262626;transform:scale(0.971,0.970);transform-origin:0 0;">の解除</div>
<div class="t" style="left:689.3px;top:125.0px;font-size:12px;color:#262626;transform:scale(0.713,0.970);transform-origin:0 0;">ブックの</div>
<div class="t" style="left:695.0px;top:140.0px;font-size:12px;color:#262626;transform:scale(1.022,0.970);transform-origin:0 0;">保護</div>
<div class="t" style="left:731.0px;top:124.0px;font-size:12px;color:#a6a6a6;transform:scale(1.000,0.970);transform-origin:0 0;">範囲の編集</div>
<div class="t" style="left:733.7px;top:138.5px;font-size:12px;color:#a6a6a6;transform:scale(0.912,0.970);transform-origin:0 0;">を許可する</div>
<div class="t" style="left:796.0px;top:124.0px;font-size:12px;color:#a6a6a6;transform:scale(0.797,0.970);transform-origin:0 0;">ブックの共</div>
<div class="t" style="left:797.0px;top:138.5px;font-size:12px;color:#a6a6a6;transform:scale(0.978,0.970);transform-origin:0 0;">有を解除</div>
<div class="t" style="left:724.0px;top:165.7px;font-size:12px;color:#262626;transform:scale(1.030,0.970);transform-origin:0 0;">保護</div>
<div class="t" style="left:863.5px;top:124.0px;font-size:12px;color:#262626;transform:scale(0.831,0.970);transform-origin:0 0;">インクを非表</div>
<div class="t" style="left:868.0px;top:137.4px;font-size:12px;color:#262626;transform:scale(0.915,1.091);transform-origin:0 0;">示にする</div>
<div class="t" style="left:880.7px;top:162.6px;font-size:12px;color:#262626;transform:scale(0.761,1.060);transform-origin:0 0;">インク</div>
<div class="t ns" style="left:16.4px;top:197.2px;font-size:14px;color:#262626;transform:scale(1.029,1.080);transform-origin:0 0;">A1</div>
<div class="t ns" style="left:222.9px;top:196.4px;font-size:14px;color:#262626;transform:scale(0.750,1.000);transform-origin:0 0;">1</div>
<div class="t ns" style="left:126.5px;top:735.4px;font-size:15px;color:#333;">Sheet1</div>
<div class="t" style="left:13.2px;top:766.3px;font-size:12px;color:#262626;transform:scale(1.039,0.973);transform-origin:0 0;">準備完了</div>
<div class="t" style="left:97.2px;top:766.0px;font-size:12px;color:#262626;transform:scale(0.795,0.970);transform-origin:0 0;">アクセシビリティ: 問題ありません</div>
<div class="t" style="left:444.8px;top:765.5px;font-size:12px;color:#262626;transform:scale(1.083,0.970);transform-origin:0 0;">平均: 1.5</div>
<div class="t" style="left:510.6px;top:765.5px;font-size:12px;color:#262626;transform:scale(0.935,0.970);transform-origin:0 0;">データの個数: 6</div>
<div class="t" style="left:605.7px;top:766.5px;font-size:12px;color:#262626;transform:scale(1.086,0.970);transform-origin:0 0;">合計: 3</div>
<div class="t ns" style="left:929.0px;top:764.8px;font-size:12.5px;color:#262626;transform:scale(0.990,1.222);transform-origin:0 0;">100%</div>
<div class="t" style="left:329.7px;top:415.5px;font-size:11px;color:#262626;">シート保護の解除</div>
<div class="t" style="left:326.4px;top:446.8px;font-size:12px;color:#333;transform:scale(0.843,0.970);transform-origin:0 0;">パスワード(<u>P</u>):</div>
<div class="t ns" style="left:605.0px;top:414.5px;font-size:14px;color:#333;">?</div>
<div class="t ns" style="left:557.2px;top:483.6px;font-size:13px;color:#262626;transform:scale(0.950,1.056);transform-origin:0 0;">OK</div>
<div class="t" style="left:615.5px;top:484.0px;font-size:12px;color:#262626;transform:scale(0.776,1.000);transform-origin:0 0;">キャンセル</div>
<div class="t ns" style="left:148.8px;top:250.3px;font-size:14.5px;color:#4a4a4a;transform:scale(0.936,0.970);transform-origin:0 0;font-family:'Liberation Serif',serif">セルを保護</div>
<div class="t ns" style="left:127.6px;top:272.5px;font-size:14.5px;color:#4a4a4a;transform:scale(0.938,0.970);transform-origin:0 0;font-family:'Liberation Serif',serif">セルの保護を解除</div>
<div class="t ns" style="left:309.1px;top:248.6px;font-size:14.5px;color:#4a4a4a;transform:scale(0.936,0.970);transform-origin:0 0;font-family:'Liberation Serif',serif">セルをロック</div>
<div class="t ns" style="left:287.4px;top:272.0px;font-size:14.5px;color:#4a4a4a;transform:scale(0.935,0.970);transform-origin:0 0;font-family:'Liberation Serif',serif">セルのロックを解除</div>
<div class="t ns" style="left:61.6px;top:249.0px;font-size:15px;color:#262626;">1</div>
<div class="t ns" style="left:61.6px;top:272.0px;font-size:15px;color:#262626;">2</div>
</body></html>
